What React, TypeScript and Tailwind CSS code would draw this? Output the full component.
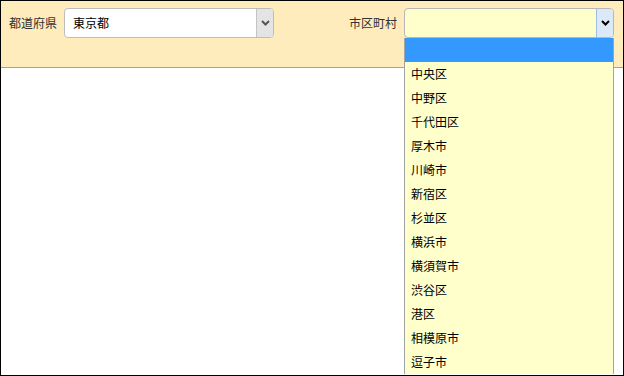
import { useState } from 'react';

const cities = [
  '',
  '中央区',
  '中野区',
  '千代田区',
  '厚木市',
  '川崎市',
  '新宿区',
  '杉並区',
  '横浜市',
  '横須賀市',
  '渋谷区',
  '港区',
  '相模原市',
  '逗子市',
];

function Chevron({ className }: { className: string }) {
  return (
    <svg width="9" height="6" viewBox="0 0 9 6" className={className}>
      <path d="M1 1 L4.5 4.5 L8 1" fill="none" stroke="currentColor" strokeWidth="2" />
    </svg>
  );
}

export default function App() {
  const [city, setCity] = useState('');

  return (
    <div
      className="relative w-[624px] h-[376px] overflow-hidden border border-black bg-white text-[12px] text-[#333]"
      style={{ fontFamily: '"Noto Sans CJK JP", "Liberation Sans", sans-serif' }}
    >
      <div className="flex items-start h-[67px] pt-[7px] pl-2 pr-[9px] bg-[#feecbd] border-b border-[#d6a11e]">
        <div className="flex items-center h-[30px] gap-[7px]">
          <span>都道府県</span>
          <div className="flex w-[210px] h-[30px] rounded-[4px] border border-[#bdbdbd] bg-white overflow-hidden">
            <span className="flex-1 flex items-center pl-2 text-black">東京都</span>
            <span className="w-[17px] flex items-center justify-center bg-[#e4e4e4] border-l border-[#c4c4c4] text-[#555]">
              <Chevron className="" />
            </span>
          </div>
        </div>

        <div className="ml-auto flex items-center h-[30px] gap-[7px]">
          <span>市区町村</span>
          <div className="relative">
            <div className="flex w-[210px] h-[30px] rounded-[4px] border border-[#b7b7b7] bg-[#ffffcc] overflow-hidden">
              <span className="flex-1 flex items-center pl-2 text-black">{city}</span>
              <span className="w-[17px] flex items-center justify-center bg-[#dce9f9] border-l border-[#9cbde6] text-black">
                <Chevron className="" />
              </span>
            </div>
            <ul className="absolute left-0 top-full w-[210px] bg-[#ffffcc] border-x border-[#a3a3a3] z-10">
              {cities.map((c, i) => (
                <li
                  key={i}
                  onClick={() => setCity(c)}
                  className={`h-6 flex items-center pl-[6px] text-black cursor-default ${
                    i === 0 ? 'bg-[#3399ff] text-white' : ''
                  }`}
                >
                  {c}
                </li>
              ))}
            </ul>
          </div>
        </div>
      </div>
    </div>
  );
}
